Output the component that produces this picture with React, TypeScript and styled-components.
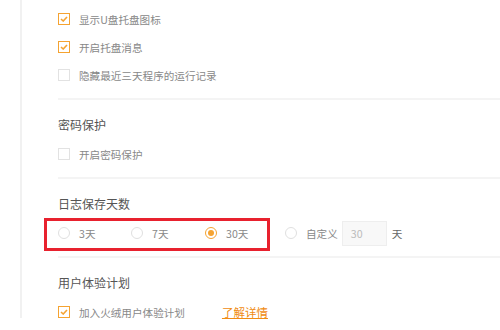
import React from "react"
import styled, { createGlobalStyle } from "styled-components"

const GlobalStyle = createGlobalStyle`
  html, body {
    margin: 0;
    padding: 0;
    background: #ffffff;
  }
  body {
    font-family: "Noto Sans CJK SC", "Noto Sans", sans-serif;
    -webkit-font-smoothing: antialiased;
  }
`

const ORANGE = "#f5a331"

const Page = styled.div`
  width: 500px;
  height: 330px;
  overflow: hidden;
  background: #fff;
`

const Panel = styled.div`
  margin-left: 20px;
  height: 318px;
  border-left: 2px solid #f1f1f1;
  padding-left: 36px;
  box-sizing: border-box;
`

const Section = styled.div<{ $first?: boolean; $last?: boolean }>`
  padding-top: ${(p) => (p.$first ? "5px" : "15px")};
  padding-bottom: 9px;
  border-bottom: ${(p) => (p.$last ? "none" : "2px solid #f4f4f4")};
`

const Heading = styled.div`
  height: 20px;
  line-height: 20px;
  font-size: 12px;
  color: #555;
  margin-bottom: 5px;
`

const Row = styled.div`
  position: relative;
  height: 28px;
  display: flex;
  align-items: center;
  font-size: 10.6px;
  color: #888;
`

const Box = styled.span<{ $checked?: boolean }>`
  width: 12px;
  height: 12px;
  box-sizing: border-box;
  border: 1px solid ${(p) => (p.$checked ? ORANGE : "#e2e2e2")};
  background: #fff;
  display: inline-flex;
  align-items: center;
  justify-content: center;
  margin-right: 9px;
  flex-shrink: 0;
`

const Label = styled.span`
  white-space: nowrap;
`

const Tick = () => (
  <svg width="8" height="6" viewBox="0 0 8 6">
    <path d="M1 3 L3.2 5 L7 1" fill="none" stroke={ORANGE} strokeWidth="1.6" />
  </svg>
)

const Check = ({ checked, children }: { checked?: boolean; children: React.ReactNode }) => (
  <Row>
    <Box $checked={checked}>{checked && <Tick />}</Box>
    <Label>{children}</Label>
  </Row>
)

const Option = styled.span<{ $width?: number }>`
  display: inline-flex;
  align-items: center;
  width: ${(p) => (p.$width ? `${p.$width}px` : "auto")};
`

const Dot = styled.span<{ $on?: boolean }>`
  width: 12px;
  height: 12px;
  box-sizing: border-box;
  border-radius: 50%;
  border: 1px solid ${(p) => (p.$on ? ORANGE : "#e0e0e0")};
  display: inline-flex;
  align-items: center;
  justify-content: center;
  margin-right: 9px;
  &::after {
    content: "";
    display: ${(p) => (p.$on ? "block" : "none")};
    width: 6px;
    height: 6px;
    border-radius: 50%;
    background: ${ORANGE};
  }
`

const Radio = ({ on, label, width }: { on?: boolean; label: string; width?: number }) => (
  <Option $width={width}>
    <Dot $on={on} />
    <Label>{label}</Label>
  </Option>
)

const DaysInput = styled.span`
  width: 45px;
  height: 25px;
  box-sizing: border-box;
  border: 1px solid #eeeeee;
  background: #f8f8f8;
  color: #bbb;
  font-size: 10.6px;
  line-height: 23px;
  padding-left: 8px;
  margin: 0 5px 0 4px;
`

const Unit = styled.span`
  color: #666;
`

const Highlight = styled.div`
  position: absolute;
  left: -14px;
  top: -1px;
  width: 226px;
  height: 33px;
  border: 3px solid #e8212e;
  box-sizing: border-box;
  pointer-events: none;
`

const Link = styled.a`
  margin-left: 37px;
  color: #f08c12;
  text-decoration: underline;
  font-size: 11.5px;
`

export default function App() {
  return (
    <Page>
      <GlobalStyle />
      <Panel>
        <Section $first>
          <Check checked>显示U盘托盘图标</Check>
          <Check checked>开启托盘消息</Check>
          <Check>隐藏最近三天程序的运行记录</Check>
        </Section>
        <Section>
          <Heading>密码保护</Heading>
          <Check>开启密码保护</Check>
        </Section>
        <Section>
          <Heading>日志保存天数</Heading>
          <Row>
            <Radio label="3天" width={73} />
            <Radio label="7天" width={74} />
            <Radio on label="30天" width={80} />
            <Radio label="自定义" />
            <DaysInput>30</DaysInput>
            <Unit>天</Unit>
            <Highlight />
          </Row>
        </Section>
        <Section $last>
          <Heading>用户体验计划</Heading>
          <Row>
            <Box $checked>
              <Tick />
            </Box>
            <Label>加入火绒用户体验计划</Label>
            <Link href="#">了解详情</Link>
          </Row>
        </Section>
      </Panel>
    </Page>
  )
}
